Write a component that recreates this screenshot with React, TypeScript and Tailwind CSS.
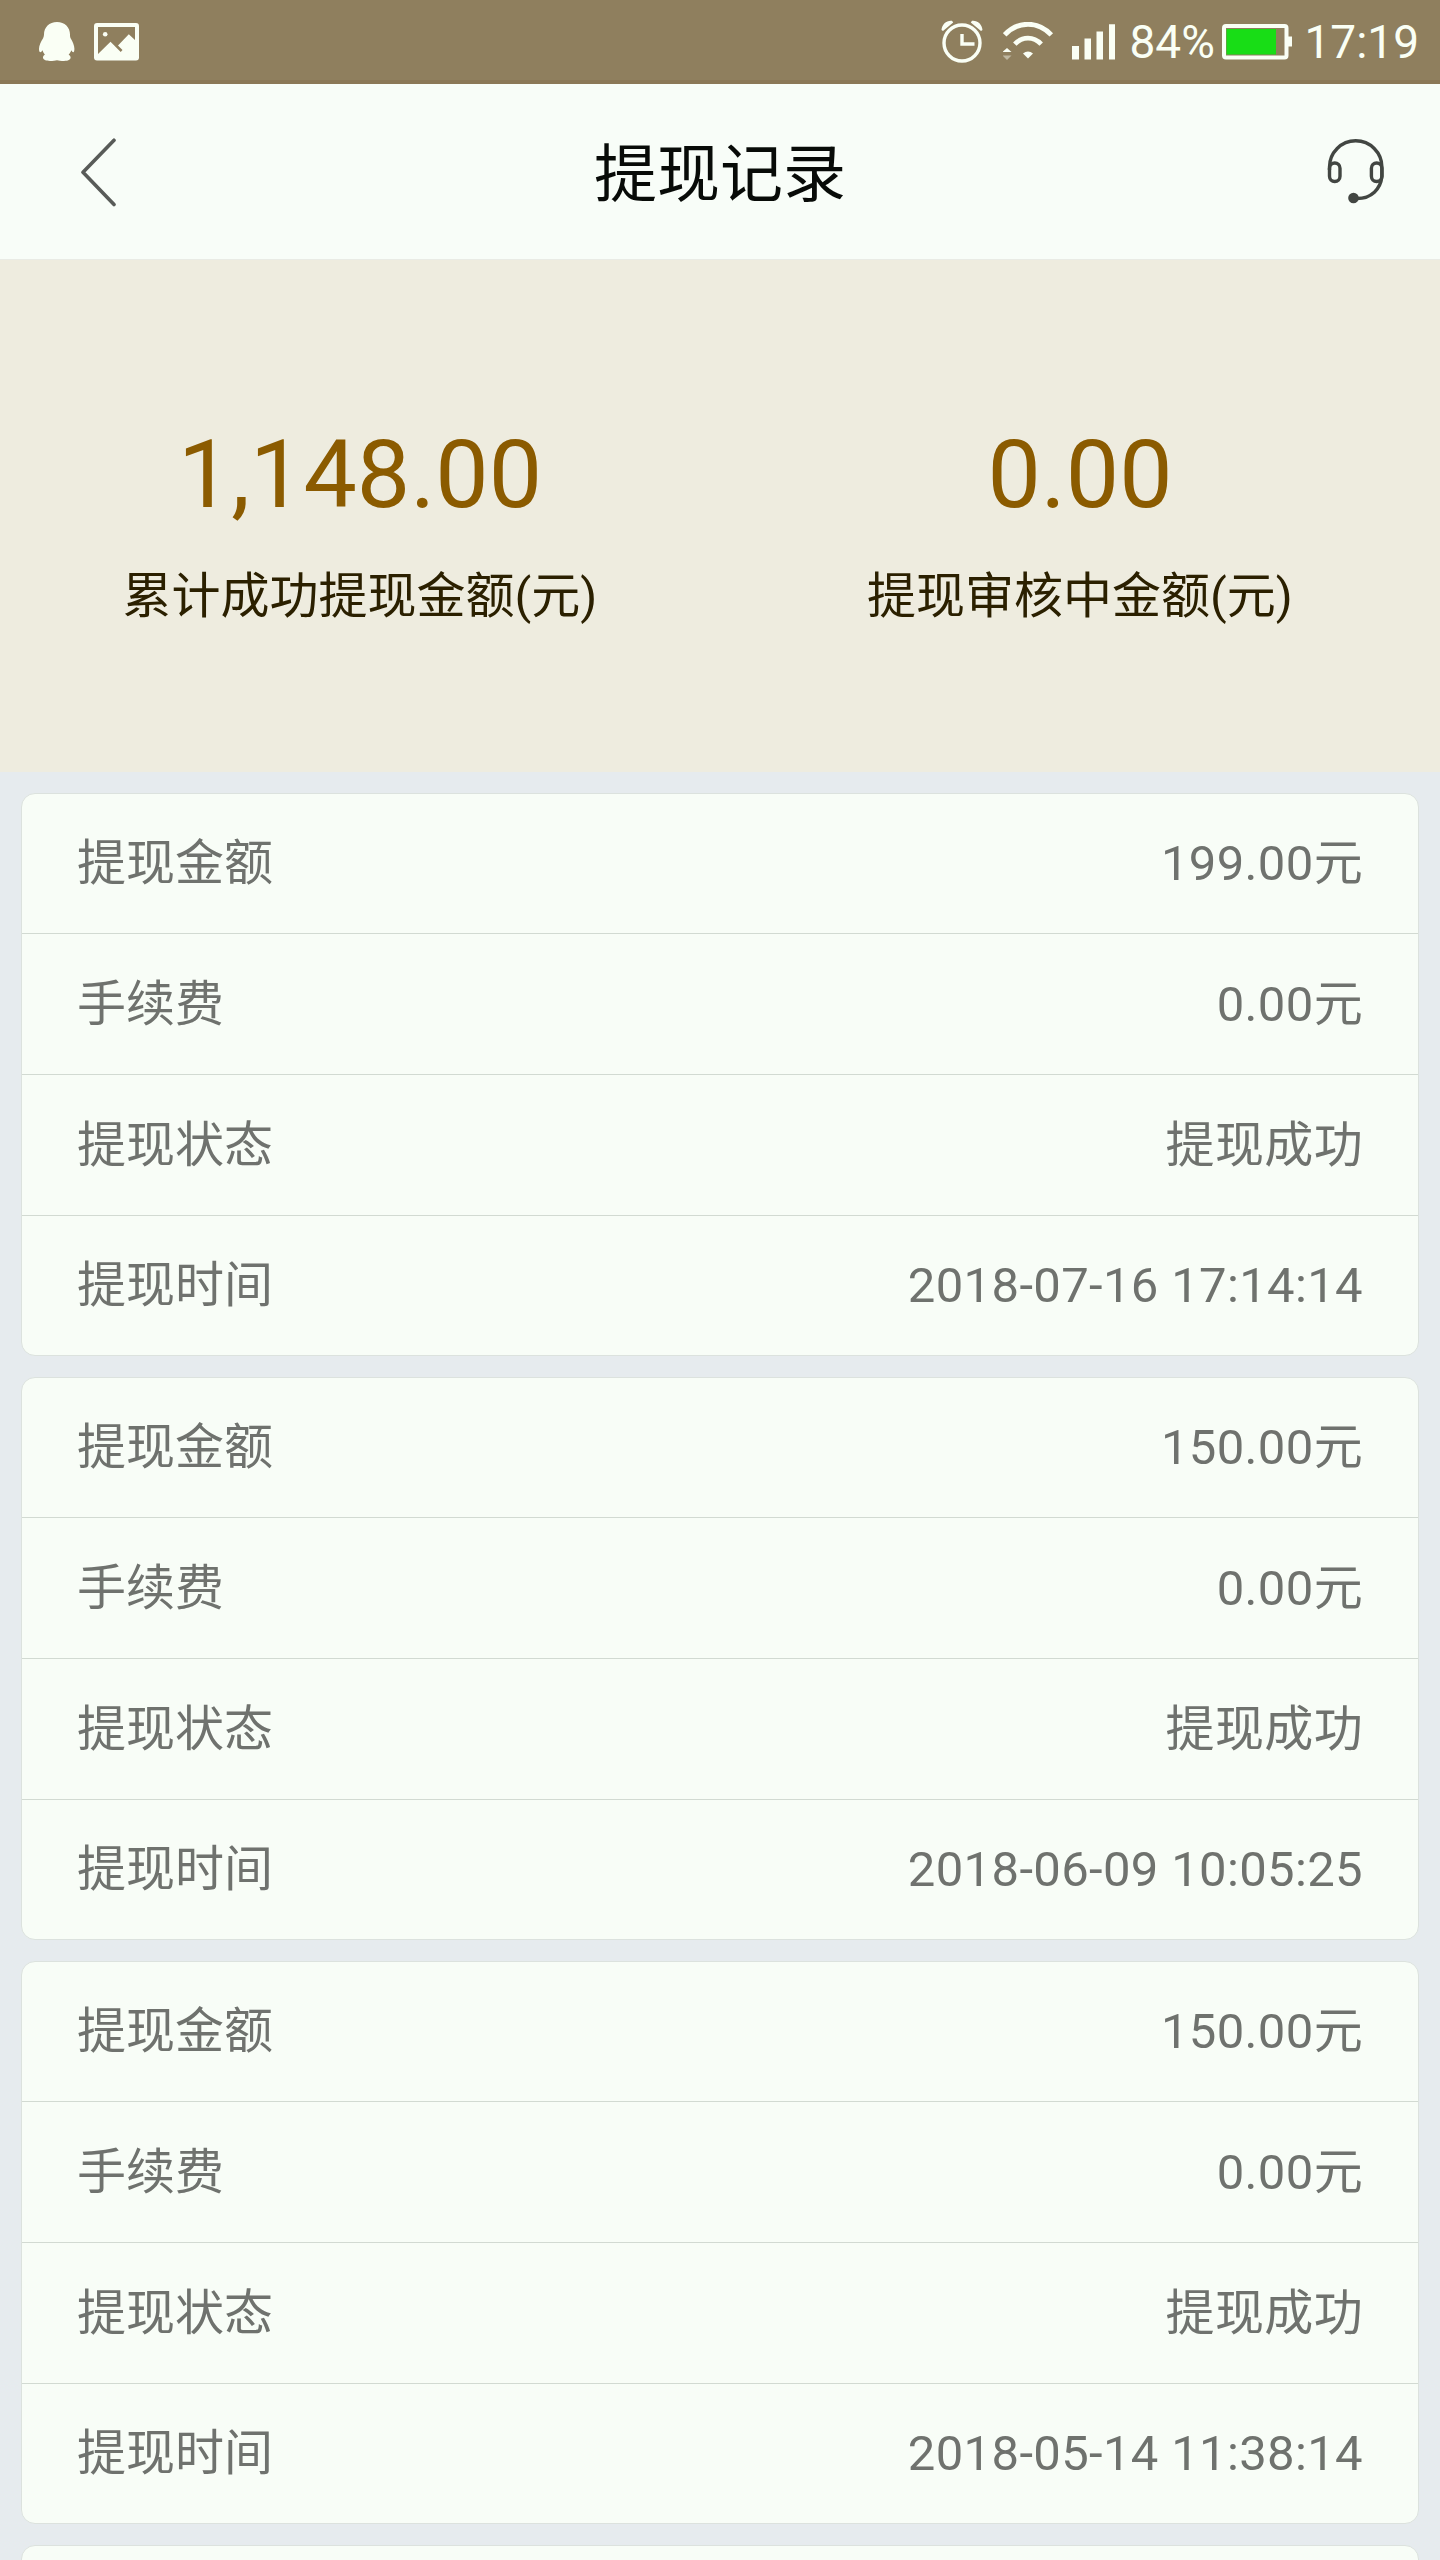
import React from "react";

interface Withdrawal {
  id: number;
  amount: string;
  fee: string;
  status: string;
  time: string;
}

const withdrawals: Withdrawal[] = [
  { id: 1, amount: "199.00", fee: "0.00", status: "提现成功", time: "2018-07-16 17:14:14" },
  { id: 2, amount: "150.00", fee: "0.00", status: "提现成功", time: "2018-06-09 10:05:25" },
  { id: 3, amount: "150.00", fee: "0.00", status: "提现成功", time: "2018-05-14 11:38:14" },
];

const QQIcon = () => (
  <svg className="w-[36px] h-[40px]" viewBox="0 0 36 40" fill="currentColor">
    <path d="M18 0C10.2 0 5 5.4 5 12.6c0 1.300-.3 2.400-.9 3.600C2 19.400 0 23.600 0 26.800c0 2 .5 3.400 1.300 3.400.7 0 1.500-.9 2.200-2 .4 1.700 1.200 3.100 2.400 4.500C4.500 33.400 4 34.500 4 35.600 4 37.800 7 39 11 39c3 0 5.400-.6 7-.8 1.600.2 4 .8 7 .8 4 0 6.600-1.200 6.600-3.400 0-1.100-.7-2.200-2-2.900 1.200-1.400 2.200-2.800 2.700-4.500.7 1.100 1.400 2 2 2 .7 0 1.100-1.400 1.100-3.400 0-3.200-1.800-7.400-3.800-10.600-.6-1.200-.6-2.300-.6-3.600C31 5.400 25.800 0 18 0z" />
  </svg>
);

const PictureIcon = () => (
  <svg className="w-[45px] h-[38px]" viewBox="0 0 45 38">
    <path
      fill="currentColor"
      fillRule="evenodd"
      d="M3 0h39a3 3 0 0 1 3 3v31.500a3 3 0 0 1-3 3H3a3 3 0 0 1-3-3V3a3 3 0 0 1 3-3zM4 4v27L16.500 18.700l10.200 10.200 1.800-1.800-4.500-4.600L34.800 11.200 41 17V4z"
    />
    <circle cx="11.200" cy="11.200" r="2.300" fill="currentColor" />
  </svg>
);

const AlarmIcon = () => (
  <svg className="w-[42px] h-[43px]" viewBox="0 0 42 43" fill="none" stroke="currentColor">
    <circle cx="21" cy="23" r="18" strokeWidth="3.400" />
    <path d="M21 14v10h12.500" strokeWidth="3.400" />
    <path d="M.5 10C1 4 5.500.2 11 .8L12.200 2.500 2 11zM41.500 10C41 4 36.500.2 31 .8L29.800 2.500 40 11z" fill="currentColor" stroke="none" />
  </svg>
);

const WifiIcon = () => (
  <svg className="w-[51px] h-[39px]" viewBox="0 0 51 39" fill="none" stroke="currentColor">
    <path d="M1.700 12.800C15-1.300 35-1.300 48.300 12.800" strokeWidth="4.800" />
    <path d="M11.800 22.200C19.500 14.200 30.500 14.200 38.200 22.200" strokeWidth="4.800" />
    <path d="M20 31.500c3-2.700 7-2.700 10 0L25 36.500z" fill="currentColor" stroke="none" />
    <path d="M4 26l4.500 4h-9z" fill="currentColor" stroke="none" />
    <path d="M-.5 33.500h9L4 38z" fill="currentColor" stroke="none" opacity="0.45" />
  </svg>
);

const SignalIcon = () => (
  <svg className="w-[44px] h-[36px]" viewBox="0 0 44 36" fill="currentColor">
    <path d="M0 22h7v13.500H0zM12.500 14.500h6.500v21h-6.500zM24.500 7.500h6.500v28h-6.500zM37 0.300h6v35.200h-6z" />
  </svg>
);

const BatteryIcon = () => (
  <svg className="w-[71px] h-[36px]" viewBox="0 0 71 36">
    <rect x="2" y="2" width="62.500" height="31.500" rx="2" fill="none" stroke="currentColor" strokeWidth="4" />
    <rect x="4.500" y="5" width="49.500" height="25.500" fill="#18dd16" />
    <path d="M66 12.500h4v10h-4z" fill="currentColor" />
  </svg>
);

const HeadsetIcon = () => (
  <svg className="w-[58px] h-[66px]" viewBox="0 0 58 66" fill="none" stroke="currentColor" strokeWidth="3.400">
    <path d="M2.500 31V28a26.200 26.200 0 0 1 52.400 0v9.500C53.500 50 44.500 59.500 30 59.500" />
    <rect x="2.500" y="24" width="10.500" height="18.500" rx="5.200" />
    <rect x="44.400" y="24" width="10.500" height="18.500" rx="5.200" />
    <circle cx="26.500" cy="59" r="5.300" fill="currentColor" stroke="none" />
  </svg>
);

const StatusBar = () => (
  <div className="flex h-[84px] items-center border-b-4 border-[#8b7857] bg-[#8f7f5e] pl-[39px] pr-[21px] pt-[3px] text-[#fafff5]">
    <QQIcon />
    <div className="ml-[19px]">
      <PictureIcon />
    </div>
    <div className="ml-auto flex items-center">
      <AlarmIcon />
      <div className="ml-[20px]">
        <WifiIcon />
      </div>
      <div className="ml-[18px]">
        <SignalIcon />
      </div>
      <span className="ml-[13px] w-[93px] whitespace-nowrap text-[46px] leading-none">84%</span>
      <BatteryIcon />
      <span className="ml-[11px] text-[46px] leading-none">17:19</span>
    </div>
  </div>
);

const Header = () => (
  <div className="flex h-[176px] items-center justify-between border-b border-[#e9ebe5] bg-[#f8fdf8] pl-[80px] pr-[55px]">
    <svg className="h-[70px] w-[38px] text-[#585b58]" viewBox="0 0 38 70" fill="none" stroke="currentColor" strokeWidth="3.600" strokeLinecap="round" strokeLinejoin="round">
      <path d="M34 3.200L3 35.200l31 32.300" />
    </svg>
    <h1 className="mr-[5px] pt-[6px] text-[63px] leading-none text-[#080b08]">提现记录</h1>
    <div className="text-[#424642]">
      <HeadsetIcon />
    </div>
  </div>
);

interface SummaryItemProps {
  value: string;
  label: string;
}

const SummaryItem: React.FC<SummaryItemProps> = ({ value, label }) => (
  <div className="flex flex-1 flex-col items-center">
    <div className="text-[95px] leading-[112px] text-[#8b5b00]">{value}</div>
    <div className="mt-[36px] text-[49px] leading-[60px] text-[#2b2000]">{label}</div>
  </div>
);

interface RowProps {
  label: string;
  value: string;
}

const Row: React.FC<RowProps> = ({ label, value }) => (
  <div className="flex h-[141px] items-center justify-between border-b border-[#d2dad2] pl-[55px] pr-[55px] pt-[1px] first:h-[140px] last:h-[139px] last:border-b-0">
    <span>{label}</span>
    <span className="tracking-[0.35px]">{value}</span>
  </div>
);

const WithdrawalCard: React.FC<{ item: Withdrawal }> = ({ item }) => (
  <div className="rounded-[14px] border border-[#dce2de] bg-[#f8fdf7] text-[49px] leading-[60px] text-[#6f726e]">
    <Row label="提现金额" value={`${item.amount}元`} />
    <Row label="手续费" value={`${item.fee}元`} />
    <Row label="提现状态" value={item.status} />
    <Row label="提现时间" value={item.time} />
  </div>
);

const App: React.FC = () => {
  return (
    <div className="h-[2560px] w-[1440px] overflow-hidden bg-[#e6ebee] font-['Roboto','Noto_Sans_CJK_SC',sans-serif]">
      <StatusBar />
      <Header />
      <div className="flex h-[512px] bg-[#eeecdf] pt-[159px]">
        <SummaryItem value="1,148.00" label="累计成功提现金额(元)" />
        <SummaryItem value="0.00" label="提现审核中金额(元)" />
      </div>
      <div className="flex flex-col gap-[21px] px-[21px] pt-[21px]">
        {withdrawals.map((item) => (
          <WithdrawalCard key={item.id} item={item} />
        ))}
        <div className="h-[140px] rounded-t-[14px] border border-[#dce2de] bg-[#f8fdf7]" />
      </div>
    </div>
  );
};

export default App;
